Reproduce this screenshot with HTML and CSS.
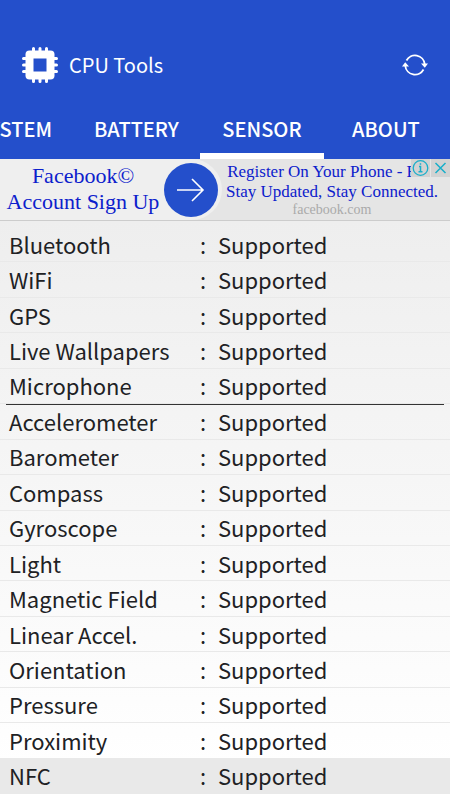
FILE: index.html
```
<!DOCTYPE html>
<html lang="en">
<head>
<meta charset="utf-8">
<meta name="viewport" content="width=device-width, initial-scale=1">
<title>CPU Tools</title>
<link rel="stylesheet" href="styles.css">
</head>
<body>
<header class="app-header">
  <div class="title-bar">
    <svg class="logo" viewBox="0 0 36 36" aria-hidden="true">
      <path d="M11.500 1.500v33M18 1.500v33M24.500 1.500v33M1.500 11.500h33M1.500 18h33M1.500 24.500h33" stroke="#fff" stroke-width="3" stroke-linecap="round"/>
      <rect x="3.500" y="3.500" width="29" height="29" rx="4" fill="#fff"/>
      <rect x="11.500" y="11.500" width="13" height="13" fill="#244fcb"/>
    </svg>
    <h1>CPU Tools</h1>
    <button class="refresh" type="button" aria-label="Refresh">
      <svg viewBox="0 0 26 24" fill="none" stroke="#fff" stroke-width="1.800">
        <path d="M4.500 7.500A9.700 9.700 0 0 1 22.700 11M21.500 16.500A9.700 9.700 0 0 1 3.300 13"/>
        <path d="M19 10.500h7l-3.200 4.300zM0 13.500h7l-3.800-4.300z" fill="#fff" stroke="none"/>
      </svg>
    </button>
  </div>
  <nav class="tabs">
    <a class="first" href="#system">SYSTEM</a>
    <a href="#battery">BATTERY</a>
    <a class="active" href="#sensor" aria-current="page">SENSOR</a>
    <a href="#about">ABOUT</a>
  </nav>
</header>
<aside class="ad">
  <a class="ad-title" href="#ad">Facebook©<br>Account Sign Up</a>
  <a class="ad-arrow" href="#ad" aria-label="Open">
    <svg viewBox="0 0 54 54" fill="none" stroke="#fff" stroke-width="1.600"><path d="M13 27h26M28 16l11 11L28 38"/></svg>
  </a>
  <div class="ad-copy">
    <p>Register On Your Phone - Free</p>
    <p>Stay Updated, Stay Connected.</p>
    <small>facebook.com</small>
  </div>
  <div class="ad-controls">
    <button type="button" aria-label="Ad information"><svg viewBox="0 0 18 18" fill="none" stroke="#18afca" stroke-width="1.300"><circle cx="9" cy="9" r="7.300"/><path d="M7.500 7.500H9v5M7 12.700h4M8.200 5h1.500" stroke-width="1.500"/></svg></button>
    <button type="button" aria-label="Close ad"><svg viewBox="0 0 18 18" fill="none" stroke="#18afca" stroke-width="1.500"><path d="M4 4l10 10M14 4L4 14"/></svg></button>
  </div>
</aside>
<main>
  <table>
    <tbody>
      <tr><th scope="row">Bluetooth</th><td class="colon">:</td><td>Supported</td></tr>
      <tr><th scope="row">WiFi</th><td class="colon">:</td><td>Supported</td></tr>
      <tr><th scope="row">GPS</th><td class="colon">:</td><td>Supported</td></tr>
      <tr><th scope="row">Live Wallpapers</th><td class="colon">:</td><td>Supported</td></tr>
      <tr><th scope="row">Microphone</th><td class="colon">:</td><td>Supported</td></tr>
    </tbody>
    <tbody class="motion">
      <tr><th scope="row">Accelerometer</th><td class="colon">:</td><td>Supported</td></tr>
      <tr><th scope="row">Barometer</th><td class="colon">:</td><td>Supported</td></tr>
      <tr><th scope="row">Compass</th><td class="colon">:</td><td>Supported</td></tr>
      <tr><th scope="row">Gyroscope</th><td class="colon">:</td><td>Supported</td></tr>
      <tr><th scope="row">Light</th><td class="colon">:</td><td>Supported</td></tr>
      <tr><th scope="row">Magnetic Field</th><td class="colon">:</td><td>Supported</td></tr>
      <tr><th scope="row">Linear Accel.</th><td class="colon">:</td><td>Supported</td></tr>
      <tr><th scope="row">Orientation</th><td class="colon">:</td><td>Supported</td></tr>
      <tr><th scope="row">Pressure</th><td class="colon">:</td><td>Supported</td></tr>
      <tr><th scope="row">Proximity</th><td class="colon">:</td><td>Supported</td></tr>
      <tr class="pressed"><th scope="row">NFC</th><td class="colon">:</td><td>Supported</td></tr>
    </tbody>
  </table>
</main>
</body>
</html>
```
FILE: styles.css
```
* { box-sizing: border-box; }

body {
  margin: 0;
  min-height: 100vh;
  display: flex;
  flex-direction: column;
  overflow-x: hidden;
  font-family: "Noto Sans CJK SC", "Noto Sans", sans-serif;
  color: #202124;
  background: #fff;
}

a { color: inherit; text-decoration: none; }

button {
  padding: 0;
  border: 0;
  background: none;
  cursor: pointer;
}

svg { display: block; }

.app-header {
  padding-top: 30px;
  background: #244fcb;
  color: #fff;
}

.title-bar {
  display: flex;
  align-items: center;
  height: 69px;
  padding: 0 22px;
}

.logo { width: 36px; height: 36px; }

h1 {
  flex: 1;
  margin: 0 0 0 11px;
  font-size: 20px;
  line-height: 30px;
  font-weight: 400;
}

.refresh svg { width: 26px; height: 24px; }

.tabs {
  display: flex;
  overflow: hidden;
}

.tabs a {
  flex: none;
  min-width: 124px;
  height: 60px;
  padding: 0 21px;
  border-bottom: 6px solid transparent;
  font-size: 20px;
  line-height: 60px;
  font-weight: 500;
  text-align: center;
}

.tabs .active { border-color: #fff; }

.tabs .first {
  display: flex;
  width: 73px;
  min-width: 0;
  padding-left: 0;
  direction: rtl;
}

.ad {
  position: relative;
  display: flex;
  align-items: center;
  height: 62px;
  border-bottom: 1px solid #ccc;
  background: #e5e5e5;
  color: #0c20cc;
  font-family: "Liberation Serif", serif;
  overflow: hidden;
}

.ad-title {
  flex: none;
  align-self: stretch;
  width: 164px;
  padding-left: 2px;
  padding-top: 4px;
  background: #efefef;
  font-size: 22px;
  line-height: 26px;
  text-align: center;
  white-space: nowrap;
}

.ad-arrow {
  flex: none;
  display: flex;
  align-items: center;
  align-self: stretch;
  padding-right: 4px;
  border-radius: 0 31px 31px 0;
  background: #efefef;
}

.ad-arrow svg {
  width: 54px;
  height: 54px;
  border-radius: 50%;
  background: #244fcb;
}

.ad-copy {
  flex: 1;
  padding-right: 8px;
  text-align: center;
  white-space: nowrap;
}

.ad-copy p {
  margin: 0;
  font-size: 17px;
  line-height: 20px;
}

.ad-copy small {
  display: block;
  color: #aaa;
  font-size: 14px;
  line-height: 16px;
}

.ad-controls {
  position: absolute;
  top: 0;
  right: 0;
  display: flex;
  gap: 1px;
  background: #e5e5e5;
}

.ad-controls button { background: #d2d2d2; }
.ad-controls svg { width: 19px; height: 18px; }

main {
  flex: 1;
  display: grid;
  padding: 6px 0;
  background: linear-gradient(#eee, #fff 94%);
}

table {
  width: 100%;
  border-spacing: 0;
  table-layout: fixed;
  font-size: 22px;
  line-height: 32px;
}

th, td {
  padding: 0 0 1px;
  border-bottom: 1px solid #e9e9e9;
  font-weight: 400;
  text-align: left;
  white-space: nowrap;
}

th { width: 200px; padding-left: 9px; }
.colon { width: 18px; }

.motion tr:first-child {
  background: linear-gradient(#333, #333) top center / calc(100% - 12px) 1px no-repeat;
}

.pressed { background: #e9e9e9; }
```
